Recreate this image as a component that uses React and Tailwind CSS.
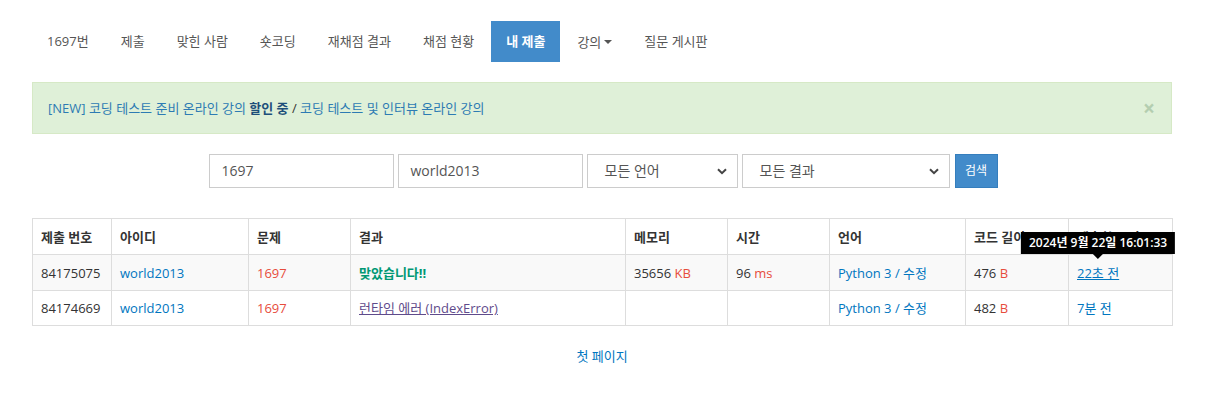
import React from 'react';

const FONT = { fontFamily: '"Open Sans", "Noto Sans CJK KR", sans-serif' };

const navItems = ['1697번', '제출', '맞힌 사람', '숏코딩', '재채점 결과', '채점 현황', '내 제출', '강의', '질문 게시판'];

const cols = [
  { label: '제출 번호', w: 'w-[79px]' },
  { label: '아이디', w: 'w-[137px]' },
  { label: '문제', w: 'w-[102px]' },
  { label: '결과', w: 'w-[275px]' },
  { label: '메모리', w: 'w-[102px]' },
  { label: '시간', w: 'w-[102px]' },
  { label: '언어', w: 'w-[136px]' },
  { label: '코드 길이', w: 'w-[103px]' },
  { label: '제출한 시간', w: 'w-[104px]' },
];

const Chevron = () => (
  <svg width="10" height="7" viewBox="0 0 10 7" className="text-[#444]">
    <path d="M1 1.2 L5 5.2 L9 1.2" fill="none" stroke="currentColor" strokeWidth="2" />
  </svg>
);

const App = () => {
  return (
    <div className="w-[1229px] h-[405px] bg-white text-[13px] leading-[20px] text-[#333]" style={FONT}>
      <div className="w-[1140px] ml-[32px]">
        {/* Nav */}
        <ul className="flex pt-[21px]">
          {navItems.map((item, i) => (
            <li key={item} className={i === 0 ? '' : 'ml-[2px]'}>
              {item === '내 제출' ? (
                <span className="block px-[15px] py-[10px] bg-[#428bca] text-white font-bold h-[41px]">{item}</span>
              ) : item === '강의' ? (
                <span className="flex items-center px-[15px] py-[10px] text-[#555] h-[41px]">
                  {item}
                  <span className="ml-[3px] w-0 h-0 border-l-[4px] border-r-[4px] border-t-[4px] border-l-transparent border-r-transparent border-t-[#555]" />
                </span>
              ) : (
                <span className="block px-[15px] py-[10px] text-[#555] h-[41px]">{item}</span>
              )}
            </li>
          ))}
        </ul>

        {/* Alert */}
        <div className="mt-[20px] h-[52px] flex items-center justify-between px-[15px] bg-[#dff0d8] border border-[#d6e9c6]">
          <span className="text-[13px] text-[#2d7bb3]">
            [NEW] 코딩 테스트 준비 온라인 강의 <b className="text-[#1d4f7a]">할인 중</b>
            <span className="text-[#333]"> / </span>코딩 테스트 및 인터뷰 온라인 강의
          </span>
          <span className="text-[21px] font-bold text-[#b4ceb0] mr-[1px] leading-none">×</span>
        </div>

        {/* Search form */}
        <div className="flex justify-center mt-[20px] text-[14px] pl-[2px]">
          <div className="w-[185px] h-[34px] border border-[#ccc] px-[12px] flex items-center text-[#555]">1697</div>
          <div className="ml-[4px] w-[185px] h-[34px] border border-[#ccc] px-[12px] flex items-center text-[#555]">world2013</div>
          <div className="ml-[4px] w-[151px] h-[34px] border border-[#ccc] pl-[17px] pr-[10px] flex items-center justify-between text-[#555]">
            <span>모든 언어</span>
            <Chevron />
          </div>
          <div className="ml-[4px] w-[208px] h-[34px] border border-[#ccc] pl-[17px] pr-[10px] flex items-center justify-between text-[#555]">
            <span>모든 결과</span>
            <Chevron />
          </div>
          <div className="ml-[5px] w-[43px] h-[34px] bg-[#428bca] border border-[#357ebd] text-white text-[12px] flex items-center justify-center">검색</div>
        </div>

        {/* Table */}
        <table className="mt-[30px] w-full border-collapse border border-[#ddd] table-fixed">
          <thead>
            <tr className="h-[36px]">
              {cols.map((c) => (
                <th key={c.label} className={`${c.w} border border-[#ddd] px-[8px] text-left font-bold`}>{c.label}</th>
              ))}
            </tr>
          </thead>
          <tbody>
            <tr className="h-[36px] bg-[#f9f9f9]">
              <td className="border border-[#ddd] px-[8px]">84175075</td>
              <td className="border border-[#ddd] px-[8px] text-[#0076c0]">world2013</td>
              <td className="border border-[#ddd] px-[8px] text-[#e74c3c]">1697</td>
              <td className="border border-[#ddd] px-[8px] text-[#009874] font-bold">맞았습니다!!</td>
              <td className="border border-[#ddd] px-[8px]">35656 <span className="text-[#e74c3c]">KB</span></td>
              <td className="border border-[#ddd] px-[8px]">96 <span className="text-[#e74c3c]">ms</span></td>
              <td className="border border-[#ddd] px-[8px] text-[#0076c0]">Python 3 / 수정</td>
              <td className="border border-[#ddd] px-[8px]">476 <span className="text-[#e74c3c]">B</span></td>
              <td className="border border-[#ddd] px-[8px]">
                <span className="relative inline-block text-[#0076c0] underline">
                  22초 전
                  <span className="absolute left-1/2 -translate-x-1/2 bottom-[24px] flex flex-col items-center">
                    <span className="whitespace-nowrap bg-black text-white text-[12px] font-semibold leading-[22px] px-[8px] no-underline">2024년 9월 22일 16:01:33</span>
                    <span className="w-0 h-0 border-l-[5px] border-r-[5px] border-t-[5px] border-l-transparent border-r-transparent border-t-black" />
                  </span>
                </span>
              </td>
            </tr>
            <tr className="h-[35px]">
              <td className="border border-[#ddd] px-[8px]">84174669</td>
              <td className="border border-[#ddd] px-[8px] text-[#0076c0]">world2013</td>
              <td className="border border-[#ddd] px-[8px] text-[#e74c3c]">1697</td>
              <td className="border border-[#ddd] px-[8px] text-[#5f4b8b] underline">런타임 에러 (IndexError)</td>
              <td className="border border-[#ddd] px-[8px]"></td>
              <td className="border border-[#ddd] px-[8px]"></td>
              <td className="border border-[#ddd] px-[8px] text-[#0076c0]">Python 3 / 수정</td>
              <td className="border border-[#ddd] px-[8px]">482 <span className="text-[#e74c3c]">B</span></td>
              <td className="border border-[#ddd] px-[8px] text-[#0076c0]">7분 전</td>
            </tr>
          </tbody>
        </table>

        {/* Pagination */}
        <div className="mt-[20px] flex justify-center">
          <span className="text-[13px] text-[#0076c0]">첫 페이지</span>
        </div>
      </div>
    </div>
  );
};

export default App;
